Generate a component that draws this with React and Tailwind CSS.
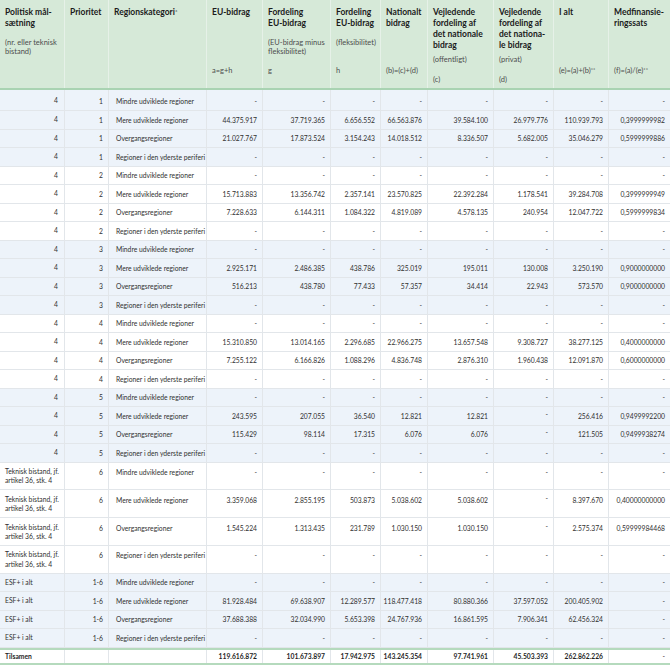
import React from "react";

const grid = "grid grid-cols-[65px_44px_98px_56px_68px_50px_47px_66px_60px_55px_61px]";

const head = [
  { t: ["Politisk mål-", "sætning"], s: ["(nr. eller teknisk", "bistand)"] },
  { t: ["Prioritet"] },
  { t: ["Regionskategori"], star: "*" },
  { t: ["EU-bidrag"], f: "a=g+h" },
  { t: ["Fordeling", "EU-bidrag"], s: ["(EU-bidrag minus", "fleksibilitet)"], f: "g" },
  { t: ["Fordeling", "EU-bidrag"], s: ["(fleksibilitet)"], f: "h" },
  { t: ["Nationalt", "bidrag"], f: "(b)=(c)+(d)" },
  { t: ["Vejledende", "fordeling af", "det nationale", "bidrag"], s: ["(offentligt)"], f: "(c)", low: true },
  { t: ["Vejledende", "fordeling af", "det nationa-", "le bidrag"], s: ["(privat)"], f: "(d)", low: true },
  { t: ["I alt"], f: "(e)=(a)+(b)", fs: "**" },
  { t: ["Medfinansie-", "ringssats"], f: "(f)=(a)/(e)", fs: "**" },
];

const regions = [
  "Mindre udviklede regioner",
  "Mere udviklede regioner",
  "Overgangsregioner",
  "Regioner i den yderste periferi",
];

const E = ["-", "-", "-", "-", "-", "-", "-", "-"];

// "^" = raised dash, as printed in the source
const groups = [
  { a: "4", p: "1", bg: "blue", vals: [E,
    ["44.375.917", "37.719.365", "6.656.552", "66.563.876", "39.584.100", "26.979.776", "110.939.793", "0,3999999982"],
    ["21.027.767", "17.873.524", "3.154.243", "14.018.512", "8.336.507", "5.682.005", "35.046.279", "0,5999999886"], E] },
  { a: "4", p: "2", bg: "white", vals: [E,
    ["15.713.883", "13.356.742", "2.357.141", "23.570.825", "22.392.284", "1.178.541", "39.284.708", "0,3999999949"],
    ["7.228.633", "6.144.311", "1.084.322", "4.819.089", "4.578.135", "240.954", "12.047.722", "0,5999999834"], E] },
  { a: "4", p: "3", bg: "blue", vals: [E,
    ["2.925.171", "2.486.385", "438.786", "325.019", "195.011", "130.008", "3.250.190", "0,9000000000"],
    ["516.213", "438.780", "77.433", "57.357", "34.414", "22.943", "573.570", "0,9000000000"], E] },
  { a: "4", p: "4", bg: "white", vals: [E,
    ["15.310.850", "13.014.165", "2.296.685", "22.966.275", "13.657.548", "9.308.727", "38.277.125", "0,4000000000"],
    ["7.255.122", "6.166.826", "1.088.296", "4.836.748", "2.876.310", "1.960.438", "12.091.870", "0,6000000000"], E] },
  { a: "4", p: "5", bg: "blue", vals: [E,
    ["243.595", "207.055", "36.540", "12.821", "12.821", "^", "256.416", "0,9499992200"],
    ["115.429", "98.114", "17.315", "6.076", "6.076", "^", "121.505", "0,9499938274"], E] },
  { a: "Teknisk bistand, jf.|artikel 36, stk. 4", p: "6", bg: "white", tall: true, vals: [E,
    ["3.359.068", "2.855.195", "503.873", "5.038.602", "5.038.602", "^", "8.397.670", "0,40000000000"],
    ["1.545.224", "1.313.435", "231.789", "1.030.150", "1.030.150", "^", "2.575.374", "0,59999984468"], E] },
  { a: "ESF+ i alt", p: "1-6", bg: "blue", vals: [E,
    ["81.928.484", "69.638.907", "12.289.577", "118.477.418", "80.880.366", "37.597.052", "200.405.902", "-"],
    ["37.688.388", "32.034.990", "5.653.398", "24.767.936", "16.861.595", "7.906.341", "62.456.324", "-"], E] },
];

const total = ["119.616.872", "101.673.897", "17.942.975", "143.245.354", "97.741.961", "45.503.393", "262.862.226", "-"];

function Val({ v }) {
  if (v === "^") return <span className="relative -top-[2px]">-</span>;
  return <span>{v}</span>;
}

function HeadCell({ c, last }) {
  return (
    <div className={`flex flex-col pt-[7px] px-[5px] ${last ? "" : "border-r border-[#e6f1e8]"}`}>
      <div className="text-[8.5px] leading-[11px] font-bold text-[#1b1b1b]">
        {c.t.map((l, i) => (
          <div key={i} className="whitespace-nowrap">
            {l}
            {c.star && i === c.t.length - 1 && <sup className="text-[6px] relative -top-[1px] font-normal">{c.star}</sup>}
          </div>
        ))}
      </div>
      {c.s && (
        <div className={`text-[7.5px] leading-[9.5px] text-[#4d4d4d] ${c.t.length > 2 ? "mt-[4px]" : "mt-[8.5px]"}`}>
          {c.s.map((l, i) => <div key={i} className="whitespace-nowrap">{l}</div>)}
        </div>
      )}
      {c.f && (
        <div className={`mt-auto text-[7.5px] leading-[9.5px] text-[#4d4d4d] whitespace-nowrap ${c.low ? "mb-[3.5px]" : "mb-[13px]"}`}>
          {c.f}
          {c.fs && <sup className="text-[5.5px] relative -top-[1px]">{c.fs}</sup>}
        </div>
      )}
    </div>
  );
}

function Row({ a, p, region, vals, bg, tall, first }) {
  const h = tall ? "h-[27.75px]" : first ? "h-[21px]" : "h-[18.5px]";
  const al = tall ? "items-start pt-[4.5px]" : first ? "items-center pt-[2px]" : "items-center";
  const cell = `flex ${al} border-r border-[#e2e6ea]`;
  const isText = a.length > 2;
  return (
    <div className={`${grid} ${h} border-b border-[#e2e6ea] ${bg === "blue" ? "bg-[#edf3fa]" : "bg-white"}`}>
      <div className={`${cell} ${isText ? "justify-start pl-[5px]" : "justify-end pr-[6px]"}`}>
        <div className="leading-[9.3px]">
          {a.split("|").map((l, i) => <div key={i} className="whitespace-nowrap">{l}</div>)}
        </div>
      </div>
      <div className={`${cell} justify-end pr-[5px]`}>{p}</div>
      <div className={`${cell} justify-start pl-[7px] whitespace-nowrap`}>{region}</div>
      {vals.map((v, i) => (
        <div key={i} className={`flex ${al} justify-end pr-[5px] whitespace-nowrap ${i < 7 ? "border-r border-[#e2e6ea]" : ""}`}>
          <Val v={v} />
        </div>
      ))}
    </div>
  );
}

export default function App() {
  return (
    <div className="w-[670px] h-[665px] overflow-hidden bg-white text-[6.75px] text-[#303030] font-['Lato','Liberation_Sans',sans-serif]">
      <div className={`${grid} h-[90px] bg-[#d6e9d8] border-b-2 border-[#a9d3b2]`}>
        {head.map((c, i) => <HeadCell key={i} c={c} last={i === head.length - 1} />)}
      </div>
      {groups.map((g, gi) =>
        regions.map((r, ri) => (
          <Row
            key={`${gi}-${ri}`}
            a={g.a}
            p={g.p}
            region={r}
            vals={g.vals[ri]}
            bg={g.bg}
            tall={g.tall}
            first={gi === 0 && ri === 0}
          />
        ))
      )}
      <div className={`${grid} h-[17.5px] bg-white border-t-2 border-b-2 border-[#b5dabd] font-bold text-[#1f1f1f]`}>
        <div className="flex items-center pl-[5px] border-r border-[#e2e6ea]">Tilsamen</div>
        <div className="border-r border-[#e2e6ea]" />
        <div className="border-r border-[#e2e6ea]" />
        {total.map((v, i) => (
          <div key={i} className={`flex items-center justify-end pr-[5px] ${i < 7 ? "border-r border-[#e2e6ea]" : "font-normal"}`}>
            {v}
          </div>
        ))}
      </div>
    </div>
  );
}
